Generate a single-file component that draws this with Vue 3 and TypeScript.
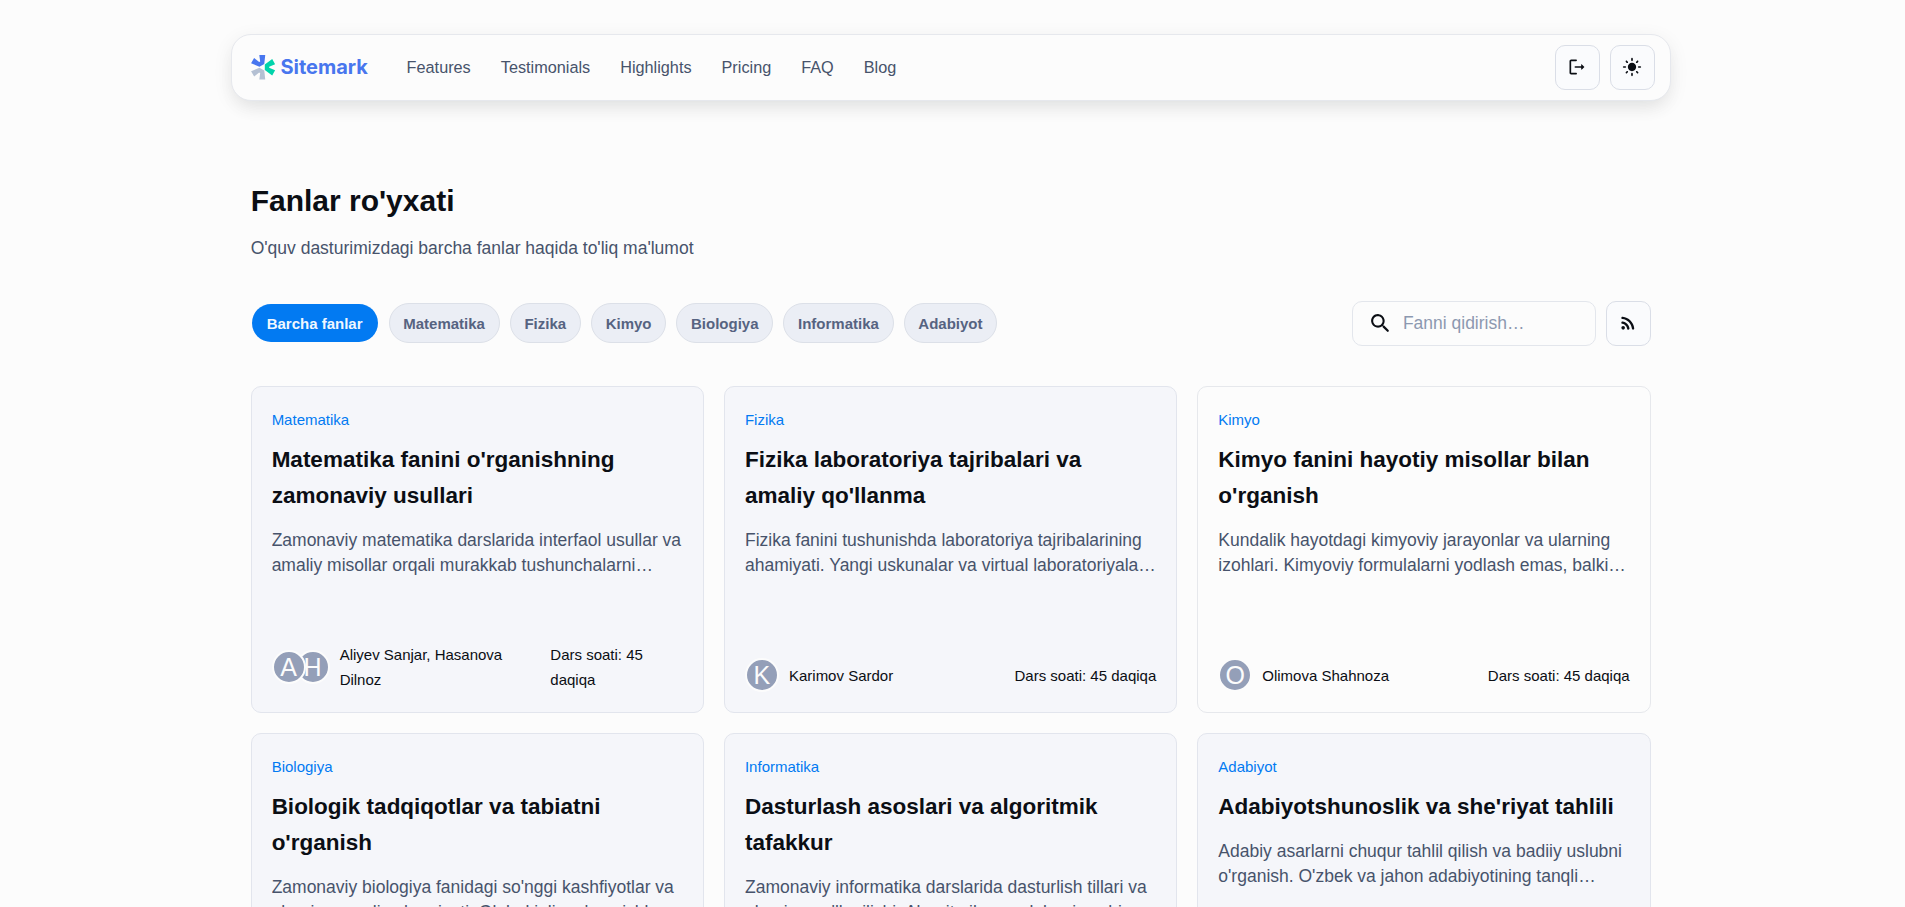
<script setup lang="ts">
import { computed, ref } from 'vue'

interface Subject {
  tag: string
  title: string
  description: string
  authors: string[]
  highlighted?: boolean
}

const links: string[] = ['Features', 'Testimonials', 'Highlights', 'Pricing', 'FAQ', 'Blog']

const allLabel = 'Barcha fanlar'
const categories: string[] = [allLabel, 'Matematika', 'Fizika', 'Kimyo', 'Biologiya', 'Informatika', 'Adabiyot']
const active = ref(allLabel)
const query = ref('')

const subjects: Subject[] = [
  {
    tag: 'Matematika',
    title: "Matematika fanini o'rganishning zamonaviy usullari",
    description:
      'Zamonaviy matematika darslarida interfaol usullar va amaliy misollar orqali murakkab tushunchalarni o\'rganish.',
    authors: ['Aliyev Sanjar', 'Hasanova Dilnoz'],
  },
  {
    tag: 'Fizika',
    title: "Fizika laboratoriya tajribalari va amaliy qo'llanma",
    description:
      'Fizika fanini tushunishda laboratoriya tajribalarining ahamiyati. Yangi uskunalar va virtual laboratoriyalar haqida.',
    authors: ['Karimov Sardor'],
  },
  {
    tag: 'Kimyo',
    title: "Kimyo fanini hayotiy misollar bilan o'rganish",
    description:
      'Kundalik hayotdagi kimyoviy jarayonlar va ularning izohlari. Kimyoviy formulalarni yodlash emas, balki tushunish.',
    authors: ['Olimova Shahnoza'],
    highlighted: true,
  },
  {
    tag: 'Biologiya',
    title: "Biologik tadqiqotlar va tabiatni o'rganish",
    description:
      "Zamonaviy biologiya fanidagi so'nggi kashfiyotlar va ularning amaliy ahamiyati. Global iqlim o'zgarishlari haqida.",
    authors: ['Rahimov Jasur'],
  },
  {
    tag: 'Informatika',
    title: 'Dasturlash asoslari va algoritmik tafakkur',
    description:
      "Zamonaviy informatika darslarida dasturlish tillari va ularning qo'llanilishi. Algoritmik masalalarni yechish usullari.",
    authors: ['Toshmatov Aziz'],
  },
  {
    tag: 'Adabiyot',
    title: "Adabiyotshunoslik va she'riyat tahlili",
    description:
      "Adabiy asarlarni chuqur tahlil qilish va badiiy uslubni o'rganish. O'zbek va jahon adabiyotining tanqli namunalari.",
    authors: ['Yusupova Malika'],
  },
]

const visible = computed(() =>
  subjects.filter(
    (s) =>
      (active.value === allLabel || s.tag === active.value) &&
      s.title.toLowerCase().includes(query.value.toLowerCase()),
  ),
)
</script>

<template>
  <div class="page">
    <header class="bar">
      <a class="logo" href="#" aria-label="Sitemark">
        <svg class="mark" viewBox="0 0 19 19" aria-hidden="true">
          <path fill="#b4c0d3" d="m.787 12.567 6.055-2.675 3.485 2.006.704 6.583-4.295-.035.634-4.577-.74-.422-3.625 2.84-2.218-3.72Z" />
          <path fill="#00d3ab" d="m10.714 11.616 5.352 3.908 2.112-3.767-4.295-1.725v-.845l4.295-1.76-2.112-3.732-5.352 3.908v4.013Z" />
          <path fill="#4876ef" d="m10.327 7.286.704-6.583-4.295.07.634 4.577-.74.422-3.66-2.816L.786 6.617l6.055 2.676 3.485-2.007Z" />
        </svg>
        <span>Sitemark</span>
      </a>
      <nav class="links">
        <a v-for="link in links" :key="link" :href="'#' + link.toLowerCase()">{{ link }}</a>
      </nav>
      <div class="actions">
        <button class="icon-button" type="button" aria-label="Chiqish">
          <svg viewBox="0 0 24 24" aria-hidden="true">
            <path d="M5 5h6c.55 0 1-.45 1-1s-.45-1-1-1H5c-1.1 0-2 .9-2 2v14c0 1.1.9 2 2 2h6c.55 0 1-.45 1-1s-.45-1-1-1H5z" />
            <path d="m20.65 11.65-2.79-2.79c-.32-.32-.86-.1-.86.35V11h-7c-.55 0-1 .45-1 1s.45 1 1 1h7v1.79c0 .45.54.67.85.35l2.79-2.79c.2-.19.2-.51.01-.7" />
          </svg>
        </button>
        <button class="icon-button" type="button" aria-label="Mavzu">
          <svg viewBox="0 0 24 24" aria-hidden="true">
            <path d="M12 7c-2.76 0-5 2.24-5 5s2.24 5 5 5 5-2.24 5-5-2.24-5-5-5M2 13h2c.55 0 1-.45 1-1s-.45-1-1-1H2c-.55 0-1 .45-1 1s.45 1 1 1m18 0h2c.55 0 1-.45 1-1s-.45-1-1-1h-2c-.55 0-1 .45-1 1s.45 1 1 1M11 2v2c0 .55.45 1 1 1s1-.45 1-1V2c0-.55-.45-1-1-1s-1 .45-1 1m0 18v2c0 .55.45 1 1 1s1-.45 1-1v-2c0-.55-.45-1-1-1s-1 .45-1 1M5.99 4.58c-.39-.39-1.03-.39-1.41 0-.39.39-.39 1.03 0 1.41l1.06 1.06c.39.39 1.03.39 1.41 0s.39-1.03 0-1.41zm12.37 12.37c-.39-.39-1.03-.39-1.41 0-.39.39-.39 1.03 0 1.41l1.06 1.06c.39.39 1.03.39 1.41 0 .39-.39.39-1.03 0-1.41zm1.06-10.96c.39-.39.39-1.03 0-1.41-.39-.39-1.03-.39-1.41 0l-1.06 1.06c-.39.39-.39 1.03 0 1.41s1.03.39 1.41 0zM7.05 18.36c.39-.39.39-1.03 0-1.41-.39-.39-1.03-.39-1.41 0l-1.06 1.06c-.39.39-.39 1.03 0 1.41s1.03.39 1.41 0z" />
          </svg>
        </button>
      </div>
    </header>

    <main class="content">
      <div class="intro">
        <h1>Fanlar ro'yxati</h1>
        <p>O'quv dasturimizdagi barcha fanlar haqida to'liq ma'lumot</p>
      </div>

      <div class="toolbar">
        <div class="chips">
          <button
            v-for="category in categories"
            :key="category"
            type="button"
            class="chip"
            :class="{ active: category === active }"
            :aria-pressed="category === active"
            @click="active = category"
          >
            {{ category }}
          </button>
        </div>
        <div class="tools">
          <label class="search">
            <svg viewBox="0 0 24 24" aria-hidden="true">
              <path d="M15.5 14h-.79l-.28-.27c1.2-1.4 1.82-3.31 1.48-5.34-.47-2.78-2.79-5-5.59-5.34-4.23-.52-7.79 3.04-7.27 7.27.34 2.8 2.56 5.12 5.34 5.59 2.03.34 3.94-.28 5.34-1.48l.27.28v.79l4.25 4.25c.41.41 1.08.41 1.49 0s.41-1.08 0-1.49zm-6 0C7.01 14 5 11.99 5 9.5S7.01 5 9.5 5 14 7.01 14 9.5 11.99 14 9.5 14" />
            </svg>
            <input v-model="query" type="text" placeholder="Fanni qidirish…" aria-label="Fanni qidirish" />
          </label>
          <button class="icon-button" type="button" aria-label="RSS">
            <svg viewBox="0 0 24 24" aria-hidden="true">
              <circle cx="6.18" cy="17.82" r="2.18" />
              <path d="M5.59 10.23c-.84-.14-1.59.55-1.59 1.4 0 .71.53 1.28 1.23 1.4 2.92.51 5.22 2.82 5.74 5.74.12.7.69 1.23 1.4 1.23.85 0 1.54-.75 1.41-1.59-.68-4.2-3.99-7.51-8.19-8.18m-.03-5.71C4.73 4.43 4 5.1 4 5.93c0 .73.55 1.33 1.27 1.4 6.01.6 10.79 5.38 11.39 11.39.07.73.67 1.28 1.4 1.28.84 0 1.5-.73 1.42-1.56-.73-7.34-6.57-13.19-13.92-13.92" />
            </svg>
          </button>
        </div>
      </div>

      <section class="grid">
        <article v-for="subject in visible" :key="subject.title" class="card" :class="{ highlighted: subject.highlighted }">
          <div class="text">
            <span class="tag">{{ subject.tag }}</span>
            <h2>{{ subject.title }}</h2>
            <p>{{ subject.description }}</p>
          </div>
          <footer>
            <div class="people">
              <div class="avatars">
                <span v-for="author in subject.authors" :key="author" class="avatar">{{ author.charAt(0) }}</span>
              </div>
              <span class="names">{{ subject.authors.join(', ') }}</span>
            </div>
            <span>Dars soati: 45 daqiqa</span>
          </footer>
        </article>
      </section>
    </main>
  </div>
</template>

<style>
body {
  background: #fcfcfc;
}
</style>

<style scoped>
/* Sizes are on the 14px base scale; the whole interface is shown at 125%. */
.page {
  zoom: 1.25;
  display: flex;
  flex-direction: column;
  align-items: center;
  padding: 27px 27px 32px 24px;
  background: #fcfcfc;
  color: #0b0e14;
  font-family: 'Liberation Sans', Arial, sans-serif;
  font-size: 14px;
  line-height: 20px;
}

.page,
.page * {
  box-sizing: border-box;
}

h1,
h2,
p {
  margin: 0;
}

button,
input {
  font: inherit;
}

svg {
  display: block;
  flex: none;
  fill: currentColor;
}

.bar {
  display: flex;
  align-items: center;
  width: 100%;
  max-width: 1152px;
  padding: 8px 12px;
  border: 1px solid #e6e8ed;
  border-radius: 16px;
  background: #fcfcfc;
  box-shadow:
    0 4px 16px rgba(9, 11, 17, 0.07),
    0 8px 16px -5px rgba(19, 23, 32, 0.07);
}

.logo {
  display: flex;
  align-items: center;
  gap: 3px;
  padding: 0 19px 0 3px;
  color: #4876ee;
  font-family: Inter, sans-serif;
  font-size: 16px;
  font-weight: 700;
  text-decoration: none;
}

.mark {
  width: 21px;
  height: 21px;
}

.links {
  display: flex;
  flex: 1;
}

.links a {
  padding: 8px 12px;
  color: #47536b;
  font-size: 13px;
  text-decoration: none;
}

.actions,
.tools,
.chips {
  display: flex;
  align-items: center;
  gap: 8px;
}

.icon-button {
  display: grid;
  place-items: center;
  width: 36px;
  height: 36px;
  padding: 0;
  border: 1px solid #dadee7;
  border-radius: 8px;
  background: #fafbfd;
  color: #0b0e14;
}

.icon-button svg {
  width: 16px;
  height: 16px;
}

.content {
  display: flex;
  flex-direction: column;
  gap: 32px;
  width: 100%;
  max-width: 1152px;
  padding: 62px 16px 0;
}

.intro {
  display: flex;
  flex-direction: column;
  gap: 10px;
}

h1 {
  font-size: 24px;
  font-weight: 700;
  line-height: 36px;
}

.intro p {
  color: #47536b;
}

.toolbar {
  display: flex;
  align-items: center;
  justify-content: space-between;
  gap: 16px;
}

.chip {
  height: 32px;
  padding: 0 11px;
  border: 1px solid #dce0e8;
  border-radius: 16px;
  background: #ebeef5;
  color: #566381;
  font-size: 12px;
  font-weight: 700;
  white-space: nowrap;
}

.chip.active {
  padding: 0 12px;
  border-color: transparent;
  background: #027af2;
  background-clip: padding-box;
  color: #f0f7ff;
}

.search {
  display: flex;
  align-items: center;
  gap: 8px;
  width: 195px;
  height: 36px;
  padding: 0 12px;
  border: 1px solid #e3e6ec;
  border-radius: 8px;
}

.search svg {
  width: 20px;
  height: 20px;
}

.search input {
  flex: 1;
  min-width: 0;
  padding: 0;
  border: 0;
  outline: 0;
  background: none;
  color: inherit;
}

.search input::placeholder {
  color: #8c98b0;
  opacity: 1;
}

.grid {
  display: grid;
  grid-template-columns: repeat(3, minmax(0, 1fr));
  gap: 16px;
}

.card {
  display: flex;
  flex-direction: column;
  justify-content: space-between;
  min-height: 262px;
  padding: 16px;
  border: 1px solid #e2e5ed;
  border-radius: 8px;
  background: #f5f6fa;
}

.card.highlighted {
  border-color: #e6e8ec;
  background: #fcfcfc;
}

.text {
  display: flex;
  flex-direction: column;
}

.tag {
  color: #027af2;
  font-size: 12px;
}

h2 {
  margin: 8px 0 11px;
  font-size: 18px;
  font-weight: 700;
  line-height: 1.6;
}

.text p {
  display: -webkit-box;
  overflow: hidden;
  -webkit-box-orient: vertical;
  -webkit-line-clamp: 2;
  color: #47536b;
}

.card footer {
  display: flex;
  align-items: center;
  justify-content: space-between;
  gap: 16px;
  font-size: 12px;
}

.people {
  display: flex;
  align-items: center;
  gap: 8px;
}

.avatars {
  display: flex;
}

.avatar {
  position: relative;
  z-index: 1;
  display: grid;
  flex: none;
  place-items: center;
  box-sizing: content-box;
  width: 24px;
  height: 24px;
  border: 2px solid #fcfcfc;
  border-radius: 50%;
  background: #949fb8;
  color: #fcfcfc;
  font-size: 20px;
}

.avatar + .avatar {
  z-index: 0;
  margin-left: -8px;
}
</style>
